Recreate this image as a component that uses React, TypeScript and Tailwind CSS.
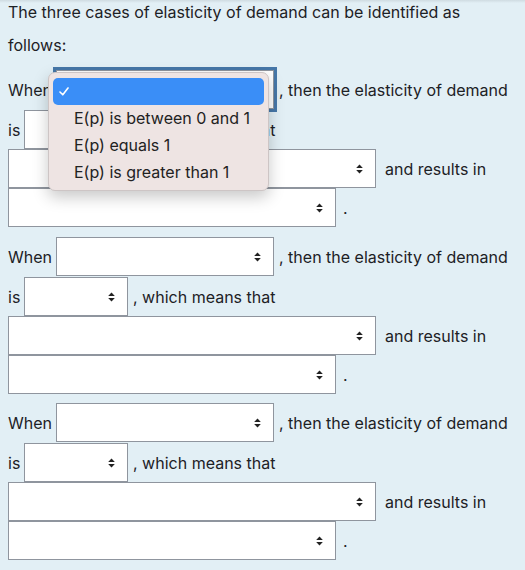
import React from "react";

const SortArrows = () => (
  <svg width="7" height="10" viewBox="0 0 7 10" className="shrink-0">
    <path d="M3.5 0.5 L6.8 4 L0.2 4 Z" fill="#222" />
    <path d="M3.5 9.5 L6.8 6 L0.2 6 Z" fill="#222" />
  </svg>
);

const Select = ({ width, focused }: { width: string; focused?: boolean }) => (
  <div
    className={`${width} h-[39px] shrink-0 bg-white border border-[#8f959e] flex items-center justify-end pr-[12px] ${
      focused ? "outline-[3px] outline-solid outline-[#4677a8]" : ""
    }`}
  >
    <SortArrows />
  </div>
);

const Block = ({ focused, top }: { focused?: boolean; top: string }) => (
  <div className={top}>
    <div className="flex items-center h-[39px]">
      <span className="w-[48px]">When</span>
      <Select width="w-[218px]" focused={focused} />
      <span className="ml-[5px]">, then the elasticity of demand</span>
    </div>
    <div className="flex items-center h-[39px] mt-[1px]">
      <span className="w-[16px]">is</span>
      <Select width="w-[104px]" />
      <span className="ml-[5px]">, which means that</span>
    </div>
    <div className="flex items-center h-[39px]">
      <Select width="w-[368px]" />
      <span className="ml-[9px]">and results in</span>
    </div>
    <div className="flex items-center h-[39px]">
      <Select width="w-[328px]" />
      <span className="ml-[7px]">.</span>
    </div>
  </div>
);

const options = ["E(p) is between 0 and 1", "E(p) equals 1", "E(p) is greater than 1"];

export default function App() {
  return (
    <div className="relative w-[525px] h-[570px] overflow-hidden bg-[#e2eff5] text-[#1d2125] text-[16px] font-['Inter','Liberation_Sans',Arial,sans-serif] pl-[8px]">
      <div className="absolute inset-x-0 top-0 h-[3px] bg-gradient-to-b from-[#cfdbe1] to-transparent" />
      <div className="h-[24px] leading-[24px]">The three cases of elasticity of demand can be identified as</div>
      <div className="h-[24px] leading-[24px] mt-[9px]">follows:</div>
      <Block focused top="mt-[13px]" />
      <Block top="mt-[10px]" />
      <Block top="mt-[9px]" />

      {/* open native dropdown */}
      <div className="absolute left-[48px] top-[72px] w-[221px] h-[119px] rounded-[7px] bg-[#eee4e3] border border-[#cdc5c5] shadow-[0_6px_16px_rgba(0,0,0,0.22)] px-[4px] pt-[5px]">
        <div className="h-[27px] rounded-[5px] bg-[#3a8ef7] flex items-center pl-[6px]">
          <svg width="10" height="9" viewBox="0 0 10 9">
            <path d="M1 5 L3.8 7.8 L9 1" fill="none" stroke="#fff" strokeWidth="1.6" strokeLinecap="round" strokeLinejoin="round" />
          </svg>
        </div>
        {options.map((o) => (
          <div key={o} className="h-[27px] leading-[27px] pl-[21px] text-[#222] text-[16px]">
            {o}
          </div>
        ))}
      </div>
    </div>
  );
}
